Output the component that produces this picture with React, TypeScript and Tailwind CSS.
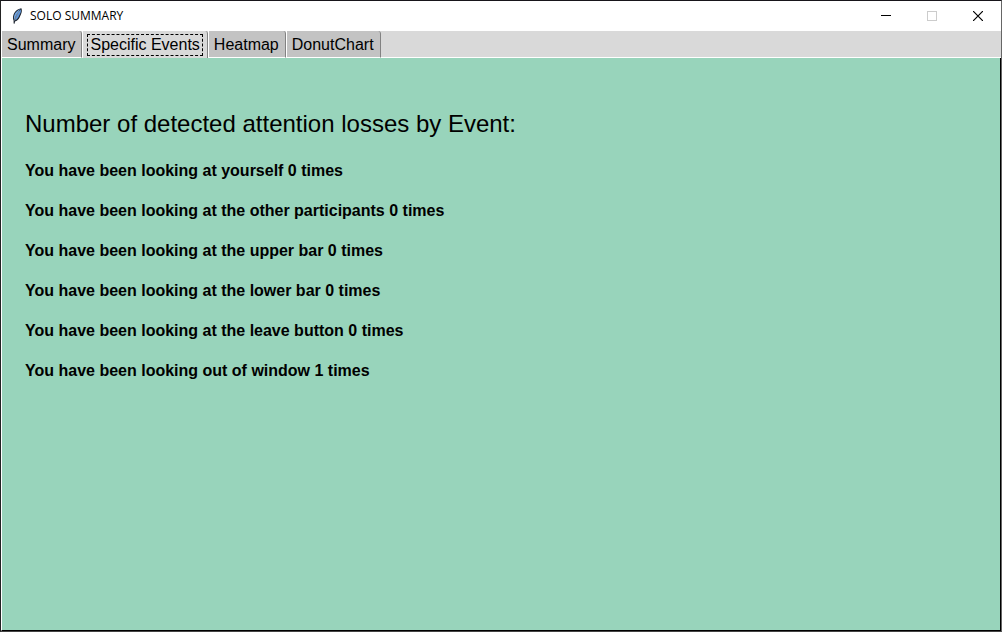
import { useState } from "react";

const tabs = ["Summary", "Specific Events", "Heatmap", "DonutChart"];

const events = [
  "You have been looking at yourself 0 times",
  "You have been looking at the other participants 0 times",
  "You have been looking at the upper bar 0 times",
  "You have been looking at the lower bar 0 times",
  "You have been looking at the leave button 0 times",
  "You have been looking out of window 1 times",
];

function FeatherIcon() {
  return (
    <svg width="16" height="16" viewBox="0 0 16 16" aria-hidden="true">
      <path d="M12.4 0.2 C9.4 0.4 5.4 3.4 4.4 7 C3.8 9 3.8 11 4.6 12.6 L4.6 15.6 L5.6 15.8 L6 13.4 C8.6 12.8 10.4 10.6 11 8.4 L12 6.2 C12.9 4.2 13.2 2 12.4 0.2 Z" fill="#1b222c" />
      <path d="M11.6 1 C8.8 1.8 6 4.6 5.2 7.4 C4.8 9 4.8 10.6 5.3 11.8 C6.4 8 8.8 4.2 11.6 1 Z" fill="#6fa3e0" />
      <path d="M11.9 1.4 C9.4 4.2 7.2 8.2 6.2 12.2 C8.2 11.4 9.6 9.6 10.1 7.8 L11.1 5.8 C11.9 4.4 12.2 2.8 11.9 1.4 Z" fill="#5c93d8" />
      <path d="M10.6 2.8 C8.4 5.6 6.6 9 5.6 12.6" fill="none" stroke="#b5d0ef" strokeWidth="0.6" />
    </svg>
  );
}

function TitleBar() {
  return (
    <header className="flex h-[30px] items-center bg-white pl-2">
      <FeatherIcon />
      <h1 className="ml-[5px] font-['Open_Sans',sans-serif] text-xs leading-4 text-black">SOLO SUMMARY</h1>
      <div className="ml-auto flex h-full">
        <button type="button" aria-label="Minimize" className="flex w-[46px] items-center justify-center">
          <svg width="10" height="10" shapeRendering="crispEdges">
            <path d="M0 4.5H10" stroke="#000" />
          </svg>
        </button>
        <button type="button" aria-label="Maximize" disabled className="flex w-[46px] items-center justify-center">
          <svg width="10" height="10" shapeRendering="crispEdges">
            <rect x="0.5" y="0.5" width="9" height="9" fill="none" stroke="#ccc" />
          </svg>
        </button>
        <button type="button" aria-label="Close" className="flex w-[46px] items-center justify-center">
          <svg width="10" height="10">
            <path d="M0 0L10 10M10 0L0 10" stroke="#000" strokeWidth="1.2" />
          </svg>
        </button>
      </div>
    </header>
  );
}

export default function App() {
  const [active, setActive] = useState(1);
  return (
    <div className="flex min-h-screen flex-col border border-t-[#17151a] border-r-[#666] border-b-[#444] border-l-[#222] bg-white font-['Liberation_Sans',Arial,sans-serif] text-black">
      <TitleBar />
      <div role="tablist" className="flex h-[27px] bg-[#d9d9d9]">
        {tabs.map((tab, i) => (
          <button
            key={tab}
            type="button"
            role="tab"
            id={`tab-${i}`}
            aria-selected={i === active}
            aria-controls="panel"
            onClick={() => setActive(i)}
            className={
              i === active
                ? "flex items-center rounded-tr-[3px] border-r border-l border-r-[#828282] border-l-white bg-[#d9d9d9] px-1 text-base leading-5 outline-none"
                : "flex items-center rounded-tr-[3px] border-r border-b border-l border-r-[#828282] border-b-white border-l-white bg-[#c3c3c3] pt-px pr-[5px] pl-1 text-base leading-5 outline-none"
            }
          >
            <span className={i === active ? "border border-dashed border-black px-0.5" : "border border-transparent"}>{tab}</span>
          </button>
        ))}
        <div className="grow border-b border-white" />
      </div>
      <main
        id="panel"
        role="tabpanel"
        aria-labelledby={`tab-${active}`}
        className="grow border-r border-b border-l border-r-black border-b-black border-l-white bg-[#98d4bb] px-[23px] pt-[50px] pb-6"
      >
        <h2 className="text-2xl leading-8">Number of detected attention losses by Event:</h2>
        <ul className="mt-[21px] flex flex-col gap-5 text-base leading-5 font-bold">
          {events.map((text) => (
            <li key={text}>{text}</li>
          ))}
        </ul>
      </main>
    </div>
  );
}
